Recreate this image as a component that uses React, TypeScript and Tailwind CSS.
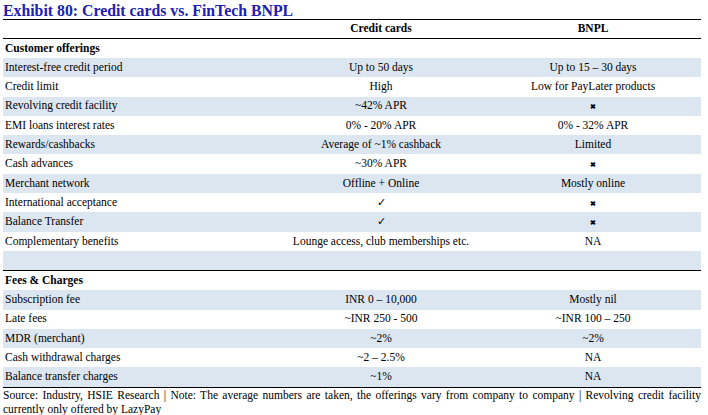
const offerings: [string, string, string][] = [
  ['Interest-free credit period', 'Up to 50 days', 'Up to 15 – 30 days'],
  ['Credit limit', 'High', 'Low for PayLater products'],
  ['Revolving credit facility', '~42% APR', 'x'],
  ['EMI loans interest rates', '0% - 20% APR', '0% - 32% APR'],
  ['Rewards/cashbacks', 'Average of ~1% cashback', 'Limited'],
  ['Cash advances', '~30% APR', 'x'],
  ['Merchant network', 'Offline + Online', 'Mostly online'],
  ['International acceptance', 'v', 'x'],
  ['Balance Transfer', 'v', 'x'],
  ['Complementary benefits', 'Lounge access, club memberships etc.', 'NA'],
  ['', '', ''],
];

const fees: [string, string, string][] = [
  ['Subscription fee', 'INR 0 – 10,000', 'Mostly nil'],
  ['Late fees', '~INR 250 - 500', '~INR 100 – 250'],
  ['MDR (merchant)', '~2%', '~2%'],
  ['Cash withdrawal charges', '~2 – 2.5%', 'NA'],
  ['Balance transfer charges', '~1%', 'NA'],
];

function Cell({ v }: { v: string }) {
  if (v === 'x') return <span className="text-[7px] font-bold">✖</span>;
  if (v === 'v') return <span className="text-[11px]">✓</span>;
  return <>{v}</>;
}

function Row({ r, blue }: { r: [string, string, string]; blue: boolean }) {
  return (
    <div className={`grid grid-cols-[274px_208px_216px] h-[19.3px] items-center ${blue ? 'bg-[#dce6f1]' : ''}`}>
      <div className="pl-[2px] whitespace-nowrap">{r[0]}</div>
      <div className="text-center whitespace-nowrap">
        <Cell v={r[1]} />
      </div>
      <div className="text-center whitespace-nowrap">
        <Cell v={r[2]} />
      </div>
    </div>
  );
}

export default function App() {
  return (
    <div className="w-[708px] h-[415px] bg-white px-[3px] pt-[2px] text-black text-[11.5px] leading-none font-['Liberation_Serif',serif]">
      <div className="w-[698px]">
        <div className="text-[#2020b0] font-bold text-[15.8px] h-[17px] leading-[17px]">Exhibit 80: Credit cards vs. FinTech BNPL</div>
        <div className="border-t-[1.5px] border-black" />
        <div className="grid grid-cols-[274px_208px_216px] h-[18px] items-center font-bold">
          <div />
          <div className="text-center">Credit cards</div>
          <div className="text-center">BNPL</div>
        </div>
        <div className="border-t-[1.5px] border-black" />
        <div className="h-[19px] flex items-center pl-[2px] font-bold">Customer offerings</div>
        {offerings.map((r, i) => (
          <Row key={i} r={r} blue={i % 2 === 0} />
        ))}
        <div className="border-t-[1.5px] border-black" />
        <div className="h-[19px] flex items-center pl-[2px] font-bold">Fees &amp; Charges</div>
        {fees.map((r, i) => (
          <Row key={i} r={r} blue={i % 2 === 0} />
        ))}
        <div className="border-t-[1.5px] border-black" />
        <p className="text-[11.5px] leading-[14px] text-justify">
          Source: Industry, HSIE Research | Note: The average numbers are taken, the offerings vary from company to company | Revolving credit facility currently only offered by LazyPay
        </p>
      </div>
    </div>
  );
}
